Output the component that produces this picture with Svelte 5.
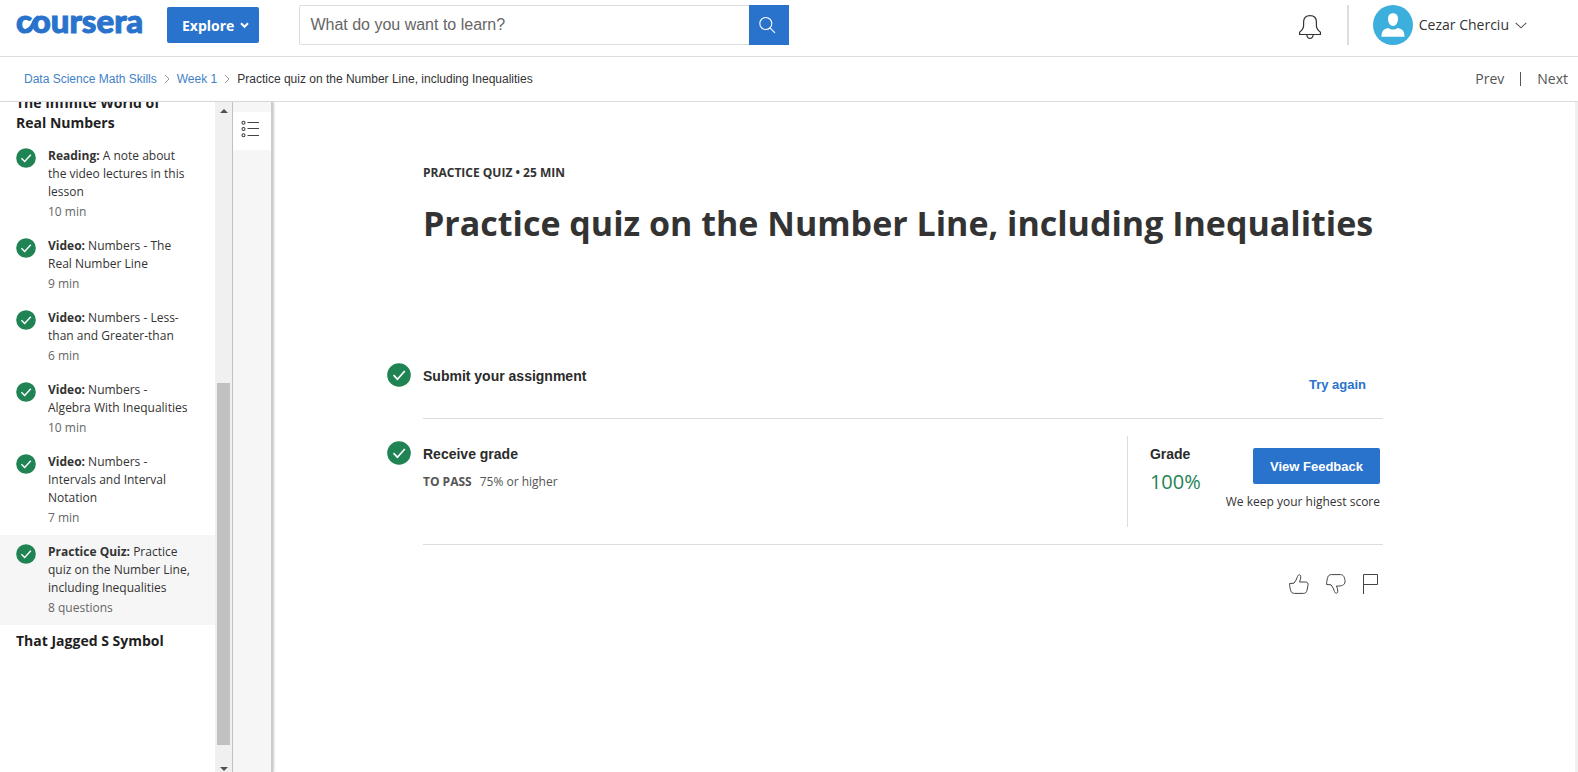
<script>
  const items = [
    { kind: 'Reading:', title: 'A note about the video lectures in this lesson', meta: '10 min' },
    { kind: 'Video:', title: 'Numbers - The Real Number Line', meta: '9 min' },
    { kind: 'Video:', title: 'Numbers - Less-than and Greater-than', meta: '6 min' },
    { kind: 'Video:', title: 'Numbers - Algebra With Inequalities', meta: '10 min' },
    { kind: 'Video:', title: 'Numbers - Intervals and Interval Notation', meta: '7 min' },
    {
      kind: 'Practice Quiz:',
      title: 'Practice quiz on the Number Line, including Inequalities',
      meta: '8 questions',
      current: true
    }
  ];
</script>

{#snippet check(size)}
  <svg class="check" width={size} height={size} viewBox="0 0 24 24" aria-hidden="true">
    <circle cx="12" cy="12" r="11.8" fill="#1f8354" />
    <path d="M6.5 12.2l3.9 4L17.8 8" fill="none" stroke="#fff" stroke-width="1.7" />
  </svg>
{/snippet}

<div class="page">
  <header class="top">
    <a class="logo" href="#home" aria-label="Coursera">
      <svg width="130" height="40" viewBox="0 0 130 40">
        <text x="0" y="28">coursera</text>
        <path d="M11 25.500Q15.500 24 17.500 19T23 12.200" fill="none" stroke="#2a73cc" stroke-width="4.600" />
      </svg>
    </a>
    <button class="explore">
      Explore
      <svg width="9" height="7" viewBox="0 0 9 7" aria-hidden="true">
        <path d="M1 1.300l3.500 3.500L8 1.300" fill="none" stroke="#fff" stroke-width="2" />
      </svg>
    </button>
    <form class="search" onsubmit={(e) => e.preventDefault()}>
      <input type="text" placeholder="What do you want to learn?" aria-label="What do you want to learn?" />
      <button aria-label="Search">
        <svg width="18" height="18" viewBox="0 0 18 18" aria-hidden="true">
          <g fill="none" stroke="#fff" stroke-width="1.100">
            <circle cx="6.800" cy="7.500" r="6" />
            <path d="M11 11.800l5 5" />
          </g>
        </svg>
      </button>
    </form>
    <div class="account">
      <button class="plain bell" aria-label="Notifications">
        <svg width="24" height="30" viewBox="0 0 24 30" aria-hidden="true">
          <g fill="none" stroke="#333" stroke-width="1.200">
            <path d="M1.600 24.500v-2.400c2.300-1.800 4-4 4-6.700v-3.500C5.600 7.800 8 5.600 12 5.600s6.400 2.200 6.400 6.300v3.500c0 2.700 1.700 4.900 4 6.700v2.400z" />
            <path d="M8.800 24.500c.2 2.500 1.500 3.900 3.200 3.900s3-1.400 3.200-3.900" />
          </g>
        </svg>
      </button>
      <span class="rule"></span>
      <button class="plain user">
        <svg width="40" height="40" viewBox="0 0 40 40" aria-hidden="true">
          <circle cx="20" cy="20" r="20" fill="#3dafdd" />
          <path d="M20 8.300c3.100 0 5 2.100 5 5.500 0 4-2.100 7.200-5 7.200s-5-3.200-5-7.200c0-3.400 1.900-5.500 5-5.500z" fill="#fff" />
          <path d="M8.400 31.700c.3-5.700 2-7.700 6.900-8.700 1.500 1.100 3 1.600 4.700 1.600s3.200-.5 4.700-1.600c4.900 1 6.600 3 6.900 8.700z" fill="#fff" />
        </svg>
        <span>Cezar Cherciu</span>
        <svg width="12" height="7" viewBox="0 0 12 7" aria-hidden="true">
          <path d="M.7.8L6 5.800 11.300.8" fill="none" stroke="#555" stroke-width="1.100" />
        </svg>
      </button>
    </div>
  </header>

  <div class="sub">
    <nav class="crumbs" aria-label="Breadcrumb">
      <a href="#course">Data Science Math Skills</a>
      <svg width="6" height="10" viewBox="0 0 6 10" aria-hidden="true"><path d="M1 1l4 4-4 4" fill="none" stroke="#999" /></svg>
      <a href="#week1">Week 1</a>
      <svg width="6" height="10" viewBox="0 0 6 10" aria-hidden="true"><path d="M1 1l4 4-4 4" fill="none" stroke="#999" /></svg>
      <span>Practice quiz on the Number Line, including Inequalities</span>
    </nav>
    <nav class="pager" aria-label="Item">
      <a href="#prev">Prev</a>
      <span class="bar"></span>
      <a href="#next">Next</a>
    </nav>
  </div>

  <div class="body">
    <aside class="side">
      <div class="lessons">
        <h2>The Infinite World of Real Numbers</h2>
        <ul>
          {#each items as item}
            <li>
              <a href="#item" class:current={item.current}>
                {@render check(20)}
                <span class="label">
                  <span><b>{item.kind}</b> {item.title}</span>
                  <span class="meta">{item.meta}</span>
                </span>
              </a>
            </li>
          {/each}
        </ul>
        <h2>That Jagged S Symbol</h2>
      </div>
      <div class="track" aria-hidden="true">
        <svg width="8" height="4" viewBox="0 0 8 4"><path d="M0 4l4-4 4 4z" fill="#505050" /></svg>
        <div class="run"><div class="thumb"></div></div>
        <svg width="8" height="4" viewBox="0 0 8 4"><path d="M0 0l4 4 4-4z" fill="#505050" /></svg>
      </div>
      <div class="rail">
        <button aria-label="Lesson list">
          <svg width="18" height="18" viewBox="0 0 18 18" aria-hidden="true">
            <g fill="none" stroke="#444" stroke-width="1.100">
              <circle cx="2.500" cy="2.700" r="1.500" />
              <circle cx="2.500" cy="9" r="1.500" />
              <circle cx="2.500" cy="15.300" r="1.500" />
              <path d="M6.500 2.500H18M6.500 8.500H18M6.500 15.500H18" />
            </g>
          </svg>
        </button>
      </div>
    </aside>

    <main>
      <p class="kicker">PRACTICE QUIZ • 25 MIN</p>
      <h1>Practice quiz on the Number Line, including Inequalities</h1>

      <section class="step submit">
        {@render check(24)}
        <h3>Submit your assignment</h3>
        <a class="again" href="#again">Try again</a>
      </section>

      <section class="step receive">
        {@render check(24)}
        <div class="pass">
          <h3>Receive grade</h3>
          <p><b>TO PASS</b><span>75% or higher</span></p>
        </div>
        <div class="result">
          <div class="grade">
            <h3>Grade</h3>
            <p>100%</p>
          </div>
          <div class="feedback">
            <button>View Feedback</button>
            <p>We keep your highest score</p>
          </div>
        </div>
      </section>

      <div class="react">
        <button class="plain" aria-label="Like">
          <svg width="20" height="20" viewBox="0 0 20 20" aria-hidden="true">
            <path d="M.6 9.500L5 9.200C6.500 7.300 7.800 5 8.500 2.500 9 .3 11.800.2 11.800 2.800c0 1.800-.6 3.200-1.300 5.200h6.200c2 0 2.700 1.600 2.300 3.300l-1 5c-.5 2-1.600 3.100-3.600 3.100H5.500c-2 0-3.200-.9-3.700-2.600C1.200 14.800.6 12.500.6 9.500z" fill="none" stroke="#444" />
          </svg>
        </button>
        <button class="plain" aria-label="Dislike">
          <svg width="20" height="20" viewBox="0 0 20 20" aria-hidden="true">
            <path d="M.6 10.500L5 10.800c1.500 1.900 2.800 4.200 3.500 6.700.5 2.200 3.300 2.300 3.300-.3 0-1.800-.6-3.200-1.300-5.200h2.200c4 0 6.700-1.600 6.300-5.300-.4-3.700-1.600-6.100-4.600-6.100H5.500c-2 0-3.200.9-3.700 2.600C1.200 5.200.6 7.500.6 10.500z" fill="none" stroke="#444" />
          </svg>
        </button>
        <button class="plain" aria-label="Flag">
          <svg width="16" height="20" viewBox="0 0 16 20" aria-hidden="true">
            <path d="M.5 20V.5h14v10H.5" fill="none" stroke="#444" />
          </svg>
        </button>
      </div>
    </main>
    <div class="edge"></div>
  </div>
</div>

<style>
  :global(body) {
    background: #fff;
  }
  .page {
    display: flex;
    flex-direction: column;
    height: 100vh;
    overflow: hidden;
    color: #333;
    font: 14px/20px 'Open Sans', sans-serif;
  }
  .page * {
    box-sizing: border-box;
  }
  svg {
    display: block;
    flex: none;
  }
  a {
    color: inherit;
    text-decoration: none;
  }
  button {
    border: 0;
    cursor: pointer;
  }
  .plain {
    padding: 0;
    background: none;
    color: inherit;
    font: inherit;
  }
  h1,
  h2,
  h3,
  p,
  ul {
    margin: 0;
    padding: 0;
    list-style: none;
  }

  .top {
    display: flex;
    flex: none;
    align-items: flex-start;
    padding: 5px 51px 11px 16px;
    border-bottom: 1px solid #ddd;
  }
  .logo text {
    fill: #2a73cc;
    stroke: #2a73cc;
    stroke-width: 1px;
    font: 900 33px Lato, sans-serif;
  }
  .explore {
    display: flex;
    align-items: center;
    gap: 6px;
    height: 36px;
    margin: 2px 40px 0 21px;
    padding: 0 10px 0 15px;
    border-radius: 2px;
    background: #2a73cc;
    color: #fff;
    font: 700 14px 'Open Sans', sans-serif;
  }
  .search {
    display: flex;
    flex: 0 1 490px;
    height: 40px;
  }
  .search input {
    flex: 1;
    min-width: 0;
    padding: 0 10px;
    border: 1px solid #ddd;
    border-right: 0;
    border-radius: 2px 0 0 2px;
    color: #333;
    font: 16px 'Liberation Sans', sans-serif;
  }
  .search input::placeholder {
    color: #666;
    opacity: 1;
  }
  .search button {
    display: flex;
    align-items: center;
    width: 40px;
    padding: 0 10px;
    background: #2a73cc;
  }
  .account {
    display: flex;
    align-items: center;
    margin-left: auto;
  }
  .rule {
    width: 2px;
    height: 40px;
    margin: 0 24px 0 25px;
    background: #ddd;
  }
  .user {
    display: flex;
    align-items: center;
    gap: 6px;
  }

  .sub {
    display: flex;
    flex: none;
    align-items: center;
    justify-content: space-between;
    height: 45px;
    padding: 0 10px 0 24px;
    border-bottom: 1px solid #ddd;
  }
  .crumbs {
    display: flex;
    align-items: center;
    gap: 7px;
    font: 12px/16px 'Liberation Sans', sans-serif;
  }
  .crumbs a {
    color: #3f82c8;
  }
  .pager {
    display: flex;
    align-items: center;
    gap: 16px;
    color: #555;
  }
  .bar {
    width: 1px;
    height: 14px;
    background: #555;
  }

  .body {
    display: flex;
    flex: 1;
    min-height: 0;
  }
  .side {
    display: flex;
    flex: none;
    overflow: hidden;
    border-right: 2px solid #ccc;
    box-shadow: 1px 0 2px #ccc;
  }
  .lessons {
    width: 215px;
    margin-top: -15px;
  }
  h2 {
    padding: 6px 40px 6px 16px;
    color: #1f1f1f;
    font: 700 14px/20px 'Open Sans', sans-serif;
  }
  .lessons a {
    display: flex;
    gap: 12px;
    padding: 8px 24px 8px 16px;
    font-size: 12px;
    line-height: 18px;
  }
  .lessons .check {
    margin-top: 1px;
  }
  .lessons .current {
    background: #f6f6f6;
  }
  .label {
    display: flex;
    flex-direction: column;
    gap: 2px;
  }
  .meta {
    color: #666;
  }
  .track {
    display: flex;
    flex-direction: column;
    align-items: center;
    width: 17px;
    padding: 7px 0 1px;
    background: #f0f0f0;
  }
  .run {
    flex: 1;
    width: 13px;
    padding: 270px 0 22px;
  }
  .thumb {
    height: 100%;
    background: #c1c1c1;
  }
  .rail {
    width: 39px;
    padding-top: 10px;
    border-left: 1px solid #c1c1c1;
    background: #f6f6f6;
  }
  .rail button {
    display: flex;
    align-items: flex-start;
    width: 100%;
    height: 38px;
    padding: 8px;
    border-radius: 2px;
    background: #fff;
  }
  main {
    flex: 1;
    min-width: 0;
    padding: 62px 192px 0 150px;
  }
  .edge {
    width: 3px;
    background: #f0f0f0;
  }
  .kicker {
    font-size: 12px;
    font-weight: 700;
    line-height: 18px;
  }
  h1 {
    margin-top: 17px;
    font: 700 34px/48px 'Open Sans', sans-serif;
  }
  h3 {
    color: #2b2b2b;
    font: 700 14px/20px 'Liberation Sans', sans-serif;
  }
  .step {
    display: flex;
    align-items: flex-start;
    border-bottom: 1px solid #ddd;
  }
  .step > .check {
    margin: 5px 12px 0 -36px;
  }
  .submit {
    margin-top: 111px;
    height: 61px;
  }
  .submit h3 {
    margin-top: 8px;
  }
  .again {
    margin: 17px 17px 0 auto;
    color: #2a73cc;
    font: 700 13px/20px 'Liberation Sans', sans-serif;
  }
  .receive {
    padding: 17px 0;
  }
  .pass {
    padding-top: 8px;
  }
  .pass p {
    display: flex;
    gap: 8px;
    margin-top: 8px;
    color: #555;
    font-size: 12px;
    line-height: 20px;
  }
  .result {
    display: flex;
    gap: 25px;
    min-height: 91px;
    margin-left: auto;
    padding: 8px 3px 0 22px;
    border-left: 1px solid #ddd;
  }
  .grade p {
    margin-top: 4px;
    color: #1f8354;
    font-size: 20px;
    line-height: 28px;
  }
  .feedback {
    display: flex;
    flex-direction: column;
    align-items: flex-end;
    gap: 8px;
    padding-top: 4px;
    font-size: 12px;
  }
  .feedback button {
    height: 36px;
    padding: 0 17px;
    border-radius: 2px;
    background: #2a73cc;
    color: #fff;
    font: 700 13px 'Liberation Sans', sans-serif;
  }
  .react {
    display: flex;
    justify-content: flex-end;
    gap: 17px;
    padding: 29px 4px 0 0;
  }
</style>
